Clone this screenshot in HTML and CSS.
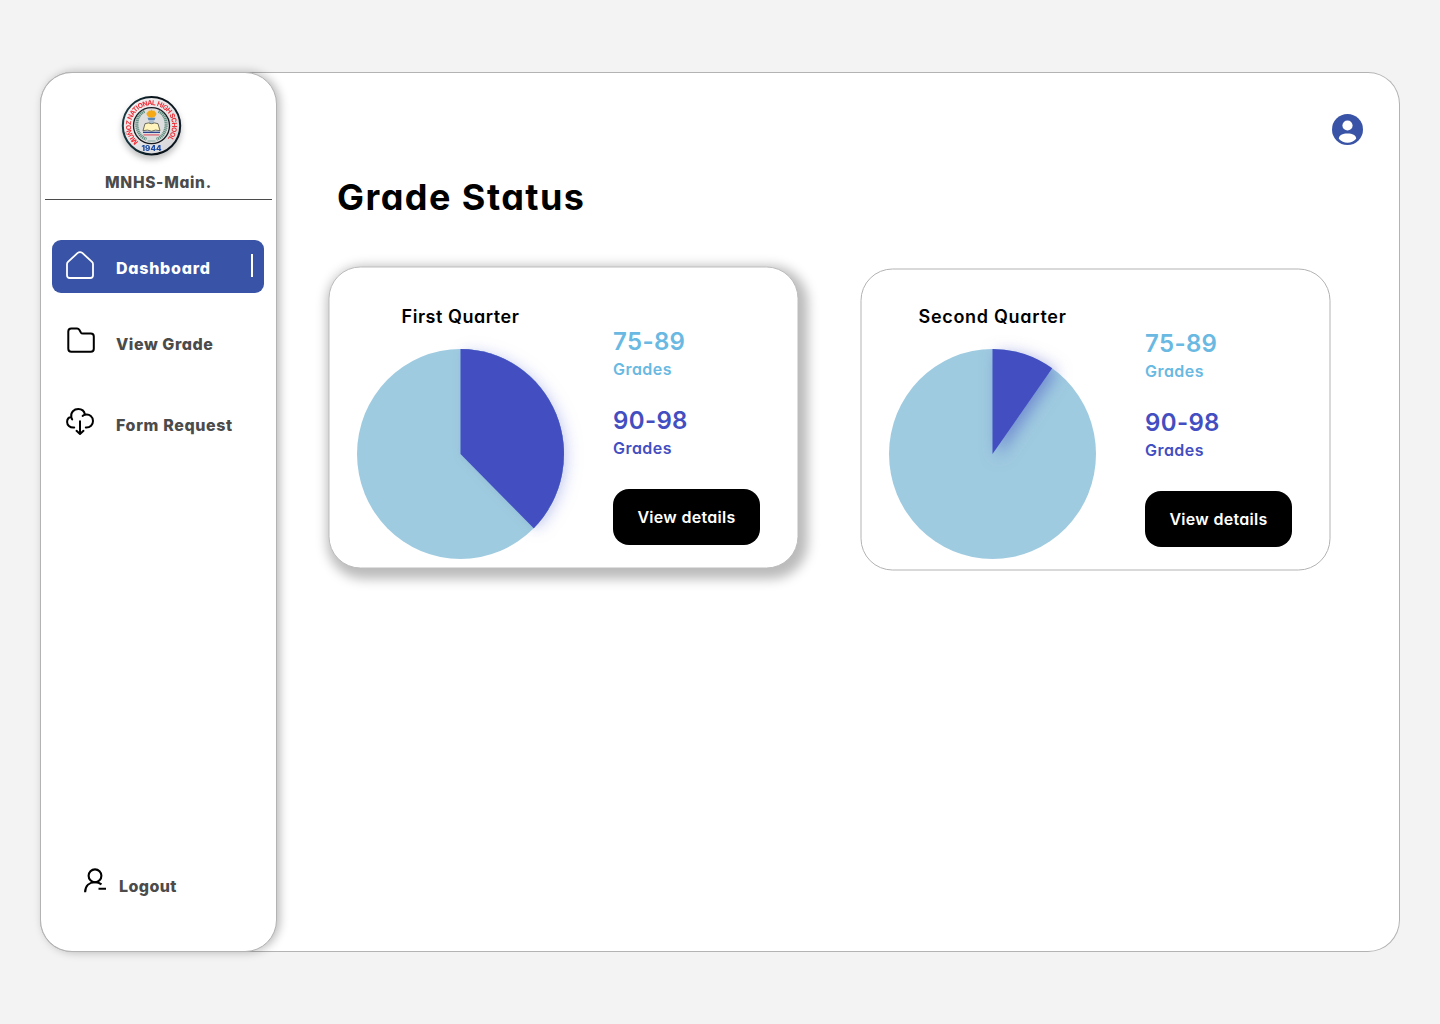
FILE: index.html
```html
<!DOCTYPE html>
<html lang="en">
<head>
<meta charset="utf-8">
<title>MNHS-Main. Grade Status</title>
<link rel="stylesheet" href="styles.css">
</head>
<body>
<div class="app">
  <aside class="sidebar">
    <svg class="logo" viewBox="0 0 60 60">
      <defs>
        <path id="ring" d="M14.6 48.4A24 24 0 1 1 45.4 48.4"/>
        <linearGradient id="rim" x1="0" x2="1"><stop offset="0" stop-color="#173b45"/><stop offset=".6" stop-color="#071016"/><stop offset="1" stop-color="#101a25"/></linearGradient>
        <linearGradient id="plate" x1="0" y1="0" x2="1" y2="1"><stop offset="0" stop-color="#f8f5f5"/><stop offset="1" stop-color="#d4d4d8"/></linearGradient>
      </defs>
      <circle cx="29.500" cy="29.700" r="28.700" fill="url(#plate)" stroke="url(#rim)" stroke-width="2"/>
      <g transform="translate(-.5 -.3)">
        <circle cx="30" cy="30" r="18" fill="#dedede" stroke="#171b20" stroke-width="1.3"/>
        <text class="logo-name" dy="3.4"><textPath href="#ring" textLength="112" lengthAdjust="spacing">MUÑOZ NATIONAL HIGH SCHOOL</textPath></text>
        <text class="logo-year" x="30" y="55.200" text-anchor="middle">1944</text>
        <g fill="none" stroke="#639183" stroke-width="3.2" stroke-dasharray="1.3 .6">
          <path d="M23 15.500C15 19 12.500 31 19 39.500Q21 42 25 43.500"/>
          <path d="M37 15.500C45 19 47.500 31 41 39.500Q39 42 35 43.500"/>
        </g>
        <path d="M25.500 19.500C24 16 27 17 27.500 14.500Q29 16 30 13.500Q31 16 32.800 14.500C33 17 36 16 34.500 19.500Q33 22 30 22Q27 22 25.500 19.500Z" fill="#f4a915"/>
        <path d="M26 22h8l-1 2.500h-6z" fill="#5a87b5"/><path d="M28 24.500h4l1 4h-6z" fill="#a8bdd0"/>
        <path d="M23.500 28Q27 26.500 30 28Q33 26.500 36.500 28L38.500 35Q34 33.500 30 35.500Q26 33.500 21.500 35Z" fill="#fff4bb" stroke="#3a3a30" stroke-width=".7"/>
        <path d="M21.500 36h17v1.300h-17z" fill="#29438e"/><path d="M22 38.500h16v1.400h-16z" fill="#de6d7c"/>
        <path d="M26 45.300h8" stroke="#6e9a8e" stroke-width=".8"/>
      </g>
    </svg>
    <div class="school">MNHS-Main.</div>
    <hr class="divider">
    <nav class="nav">
      <a class="nav-item active">
        <svg class="icon" viewBox="0 0 28 28"><path d="M1 13.200Q1 11.900 2 10.900L11.700 1.900Q14 .2 16.300 1.900L26 10.900Q27 11.900 27 13.200V24.200Q27 27 24.200 27H3.800Q1 27 1 24.200Z"/></svg>
        <span class="label t-dash">Dashboard</span><i class="marker"></i>
      </a>
      <a class="nav-item">
        <svg class="icon dark" viewBox="0 0 28 28"><path d="M2.300 4.500Q2.300 1.500 5.300 1.500H11.100Q12.500 1.500 13.300 2.800L15 5.700Q15.500 6.500 16.800 6.500H24.800Q27.800 6.500 27.800 9.500V21.700Q27.800 24.700 24.800 24.700H5.300Q2.300 24.700 2.300 21.700Z"/></svg>
        <span class="label t-view">View Grade</span>
      </a>
      <a class="nav-item">
        <svg class="icon dark" viewBox="0 0 28 28"><path transform="translate(0 -.6)" d="M8.200 20.200H7.400C3.800 20.200 1.100 17.600 1.100 14.600C1.100 11.800 2.900 9.900 5.300 9.400C4.500 4.900 8 1.700 12.300 1.700C16 1.700 18.300 3.900 19 7.300C23.800 6.300 27 9.500 27 13.600C27 17.400 24.100 20.200 20.300 20.200H19.800M5.300 9.400Q5.500 11 6.200 12M19 7.300Q17.600 7.600 16.600 8.500M14 13.900V26.400M10.500 23.400L14 26.600L17.500 23.400"/></svg>
        <span class="label t-form">Form Request</span>
      </a>
    </nav>
    <a class="logout">
      <svg class="logout-icon" viewBox="0 0 24 26"><circle cx="11" cy="7.800" r="6.400"/><path d="M1.100 24.200C1.300 17.800 5.500 14.300 11 14.300Q14.700 14.300 17.500 16.300M14.500 20.800H22"/></svg>
      <span class="label t-logout">Logout</span>
    </a>
  </aside>
  <main class="main">
    <svg class="avatar" viewBox="0 0 31 31"><circle cx="15.500" cy="15.500" r="15.500" fill="#3953a6"/><circle cx="15.500" cy="11.500" r="5.100" fill="#fff"/><path d="M6.800 24.700C7 21.200 10.500 19.600 15.500 19.600S24 21.200 24.200 24.700Q20.500 28.800 15.500 28.800T6.800 24.700Z" fill="#fff"/></svg>
    <h1 class="title">Grade Status</h1>
    <section class="cards">
      <article class="card raised">
        <div class="chart">
          <h2 class="quarter t-first">First Quarter</h2>
          <svg class="pie" viewBox="0 0 207 210">
            <path class="slice soft" d="M103.500 105V0A103.500 105 0 0 1 176.700 179.200Z"/>
            <ellipse cx="103.500" cy="105" rx="103.500" ry="105" fill="#9fcbe0"/>
            <path class="slice faint" d="M103.500 105V0A103.500 105 0 0 1 176.700 179.200Z"/>
          </svg>
        </div>
        <div class="stats">
          <div class="range low">75-89</div><div class="caption low">Grades</div>
          <div class="range high">90-98</div><div class="caption high">Grades</div>
          <button class="details">View details</button>
        </div>
      </article>
      <article class="card">
        <div class="chart">
          <h2 class="quarter t-second">Second Quarter</h2>
          <svg class="pie" viewBox="0 0 207 210">
            <ellipse cx="103.500" cy="105" rx="103.500" ry="105" fill="#9fcbe0"/>
            <path class="slice glow" d="M103.500 105V0A103.500 105 0 0 1 163.200 19.300Z"/>
          </svg>
        </div>
        <div class="stats">
          <div class="range low">75-89</div><div class="caption low">Grades</div>
          <div class="range high">90-98</div><div class="caption high">Grades</div>
          <button class="details">View details</button>
        </div>
      </article>
    </section>
  </main>
</div>
</body>
</html>
```
FILE: styles.css
```css
* { box-sizing: border-box; margin: 0; padding: 0; }
body {
  height: 1024px;
  padding: 72px 40px;
  background: #f3f3f3;
  font-family: Inter, "Liberation Sans", sans-serif;
  font-feature-settings: "cv11" 1;
  overflow: hidden;
}
.app {
  display: flex;
  height: 880px;
  background: #fff;
  border-radius: 32px;
  box-shadow: inset 0 0 0 1px #b3b3b3;
}
.sidebar {
  width: 237px;
  display: flex;
  flex-direction: column;
  background: #fff;
  border: 1px solid #b3b3b3;
  border-radius: 32px;
  box-shadow: 3px 0 10px rgba(0, 0, 0, .27);
}
.logo {
  width: 60px;
  height: 60px;
  margin: 23px 0 0 81px;
  filter: drop-shadow(0 4px 3px rgba(0, 0, 0, .25));
  overflow: visible;
}
.logo-name { font-size: 6.800px; font-weight: 700; fill: #ee3038; }
.logo-year { font-size: 8px; font-weight: 800; fill: #174aa5; }
.school {
  margin: 15px 0 0 64px;
  height: 24px;
  line-height: 24px;
  font-size: 15.500px;
  font-weight: 800;
  letter-spacing: .7px;
  color: #4b4b4b;
  white-space: nowrap;
}
.divider { height: 1px; margin: 4px 4px 0; border: 0; background: #4b4b4b; }
.nav { display: flex; flex-direction: column; margin: 40px 12px 0 11px; }
.nav-item {
  display: flex;
  align-items: center;
  height: 53px;
  padding: 0 11px 0 14px;
  border-radius: 9px;
}
.nav-item + .nav-item { margin-top: 23px; }
.nav-item + .nav-item + .nav-item { margin-top: 28px; }
.nav-item.active { background: #3953a6; }
.icon { width: 28px; height: 28px; margin-bottom: 3px; overflow: visible; fill: none; stroke: #fff; stroke-width: 1.8; stroke-linejoin: round; stroke-linecap: round; }
.icon.dark { stroke: #000; stroke-width: 2; }
.label {
  margin: 3px 0 0 22px;
  line-height: 24px;
  font-size: 16px;
  font-weight: 800;
  color: #4b4b4b;
  white-space: nowrap;
}
.active .label { color: #fff; }
.t-dash { letter-spacing: .75px; }
.t-view { letter-spacing: .55px; }
.t-form { letter-spacing: .63px; }
.t-logout { letter-spacing: .4px; }
.marker { width: 2px; height: 23px; margin: 0 0 3px auto; background: #fff; }
.logout { display: flex; align-items: flex-start; margin: auto 0 52px 43px; }
.logout-icon { width: 24px; height: 26px; fill: none; stroke: #000; stroke-width: 2.1; }
.logout .label { height: 25px; margin: 6px 0 0 11px; }
.main { flex: 1; display: flex; flex-direction: column; padding: 42px 37px 0 52px; }
.avatar { width: 31px; height: 31px; align-self: flex-end; }
.title {
  margin: 27px 0 0 8px;
  height: 50px;
  line-height: 50px;
  font-size: 36px;
  font-weight: 650;
  letter-spacing: 1.450px;
}
.cards { display: grid; grid-template-columns: 470px 470px; column-gap: 62px; margin-top: 45px; }
.card { position: relative; display: flex; height: 302px; padding-left: 28px; }
.card::before {
  content: "";
  position: absolute;
  inset: 0;
  border: 1px solid #b3b3b3;
  border-radius: 32px;
  background: #fff;
  transform: translate(-.5px, 1.500px);
}
.card:first-child::before { transform: translate(-.5px, -.5px); }
.card.raised::before { border-color: #bdbdbd; box-shadow: 4px 5px 12px 5px rgba(0, 0, 0, .27); }
.chart, .stats { position: relative; }
.chart { width: 207px; padding-top: 37px; }
.quarter {
  height: 26px;
  line-height: 26px;
  text-align: center;
  font-size: 18px;
  font-weight: 620;
  letter-spacing: .55px;
  white-space: nowrap;
}
.t-second { letter-spacing: .7px; }
.pie { display: block; width: 207px; height: 210px; margin-top: 19px; overflow: visible; }
.slice { fill: #434ec1; }
.glow { filter: drop-shadow(5px 4px 8px rgba(67, 78, 193, .5)); }
.soft { filter: drop-shadow(4px 2px 8px rgba(67, 78, 220, .2)); }
.faint { filter: drop-shadow(1px 2px 5px rgba(50, 90, 140, .1)); }
.stats { margin-left: 49px; padding-top: 56px; white-space: nowrap; }
.card:last-child .stats { padding-top: 58px; }
.range { height: 36px; line-height: 37px; font-size: 24px; font-weight: 620; letter-spacing: .35px; }
.caption { height: 22px; line-height: 20px; font-size: 16px; font-weight: 620; letter-spacing: .45px; }
.caption.low { margin-bottom: 21px; }
.low { color: #69b9e2; }
.high { color: #434ec1; }
.details {
  display: block;
  width: 147px;
  height: 56px;
  margin-top: 29px;
  border: 0;
  border-radius: 16px;
  background: #000;
  color: #fff;
  font: 620 16px Inter, "Liberation Sans", sans-serif;
  font-feature-settings: "cv11" 1;
  letter-spacing: .3px;
}
```
